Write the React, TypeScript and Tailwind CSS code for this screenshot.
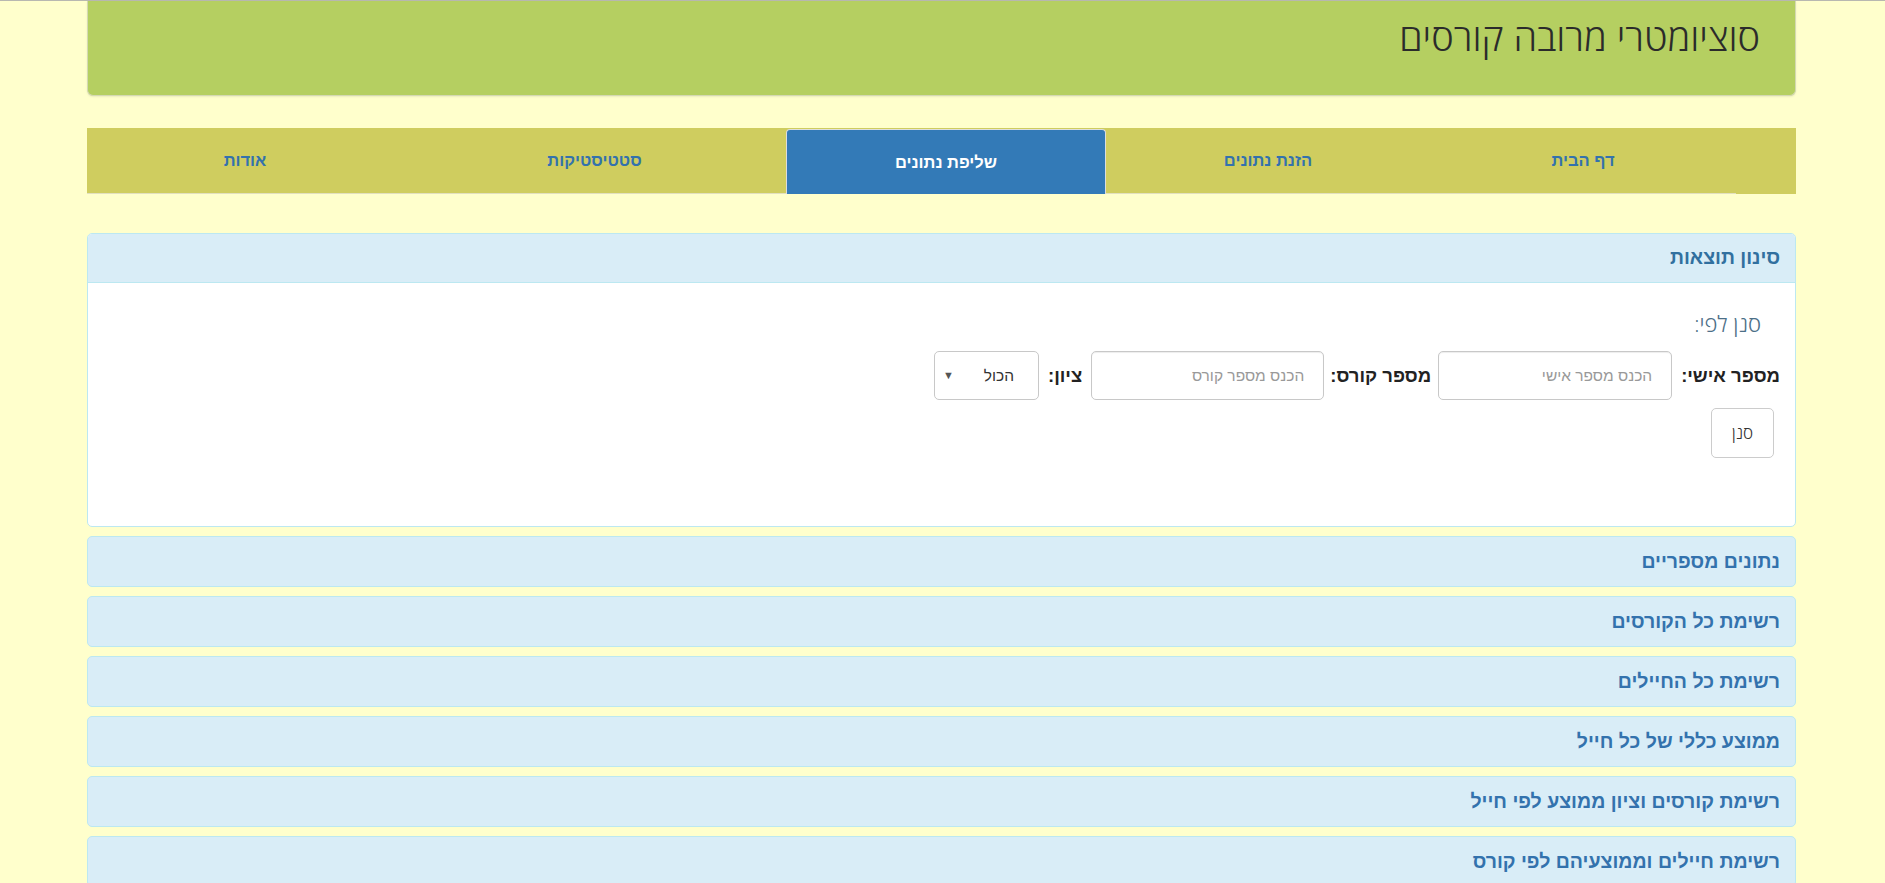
const tabs = [
  { label: 'דף הבית', w: 'w-[306px]' },
  { label: 'הזנת נתונים', w: 'w-[324px]' },
  { label: 'שליפת נתונים', w: 'w-[320px]', active: true },
  { label: 'סטטיסטיקות', w: 'w-[383px]' },
  { label: 'אודות', w: 'flex-1' },
];

const collapsed = [
  'נתונים מספריים',
  'רשימת כל הקורסים',
  'רשימת כל החיילים',
  'ממוצע כללי של כל חייל',
  'רשימת קורסים וציון ממוצע לפי חייל',
  'רשימת חיילים וממוצעיהם לפי קורס',
];

function App() {
  return (
    <div
      dir="rtl"
      className="min-h-screen border-t border-[#b8b8b0] bg-[#ffffcc] font-['Liberation_Sans',Arial,sans-serif] text-[#333]"
    >
      <div className="ml-[87px] mr-[89px]">
        {/* כותרת */}
        <div className="flex h-[95px] items-start rounded-b-[6px] border border-t-0 border-[#d4d9b2] bg-[#b5cf61] pr-[35px] pt-[12px] shadow-[0_1px_2px_rgba(0,0,0,0.08)]">
          <h1 className="font-['Open_Sans','Liberation_Sans',sans-serif] text-[38px] font-light leading-[46px] text-[#2b2b2b]">
            סוציומטרי מרובה קורסים
          </h1>
        </div>

        {/* תפריט */}
        <ul className="mt-[32px] flex h-[66px] bg-[#cfcd5f] pr-[60px]">
          {tabs.map((t) => (
            <li key={t.label} className={`${t.w} flex`}>
              {t.active ? (
                <a className="mt-[1px] flex flex-1 items-center justify-center rounded-t-[4px] border border-b-0 border-[#ddd] bg-[#337ab7] text-[16.5px] font-bold text-white">
                  {t.label}
                </a>
              ) : (
                <a className="flex flex-1 items-center justify-center border-b border-[#e2e0bf] text-[16.5px] font-bold text-[#3372ad]">
                  {t.label}
                </a>
              )}
            </li>
          ))}
        </ul>

        {/* סינון */}
        <div className="mt-[39px] rounded-[5px] border border-[#bce8f1] bg-white">
          <div className="flex h-[49px] items-center rounded-t-[4px] border-b border-[#bce8f1] bg-[#d9edf7] pr-[15px]">
            <span className="text-[19.5px] font-bold text-[#31709f]">סינון תוצאות</span>
          </div>
          <div className="px-[15px] pb-[68px] pt-[27px]">
            <h4 className="mr-[19px] font-['Open_Sans','Liberation_Sans',sans-serif] text-[22px] font-light leading-[26px] text-[#4c6f87]">
              סנן לפי:
            </h4>
            <div className="mt-[15px] flex h-[49px] items-center">
              <label className="ml-[9px] text-[18.5px] font-bold text-[#222]">מספר אישי:</label>
              <input
                placeholder="הכנס מספר אישי"
                className="h-[49px] w-[234px] rounded-[5px] border border-[#c8c8c8] px-[19px] text-[15.5px] shadow-[inset_0_1px_1px_rgba(0,0,0,0.075)] outline-none placeholder:text-[#999]"
              />
              <label className="ml-[6px] mr-[7px] text-[18.5px] font-bold text-[#222]">מספר קורס:</label>
              <input
                placeholder="הכנס מספר קורס"
                className="h-[49px] w-[233px] rounded-[5px] border border-[#c8c8c8] px-[19px] text-[15.5px] shadow-[inset_0_1px_1px_rgba(0,0,0,0.075)] outline-none placeholder:text-[#999]"
              />
              <label className="ml-[9px] mr-[9px] text-[18.5px] font-bold text-[#222]">ציון:</label>
              <div className="flex h-[49px] w-[105px] items-center justify-between rounded-[5px] border border-[#c8c8c8] pl-[8px] pr-[24px] text-[15.5px] text-[#333]">
                <span>הכול</span>
                <span className="text-[11px] text-[#555]">▼</span>
              </div>
            </div>
            <button className="mr-[6px] mt-[8px] h-[50px] w-[63px] rounded-[5px] border border-[#ccc] bg-white font-['Open_Sans','Liberation_Sans',sans-serif] text-[17px] font-light text-[#333]">
              סנן
            </button>
          </div>
        </div>

        {/* רשימות */}
        {collapsed.map((c) => (
          <div
            key={c}
            className="mt-[9px] flex h-[51px] items-center rounded-[5px] border border-[#bce8f1] bg-[#d9edf7] pr-[15px]"
          >
            <span className="text-[19.5px] font-bold text-[#3372ad]">{c}</span>
          </div>
        ))}
      </div>
    </div>
  );
}

export default App;
